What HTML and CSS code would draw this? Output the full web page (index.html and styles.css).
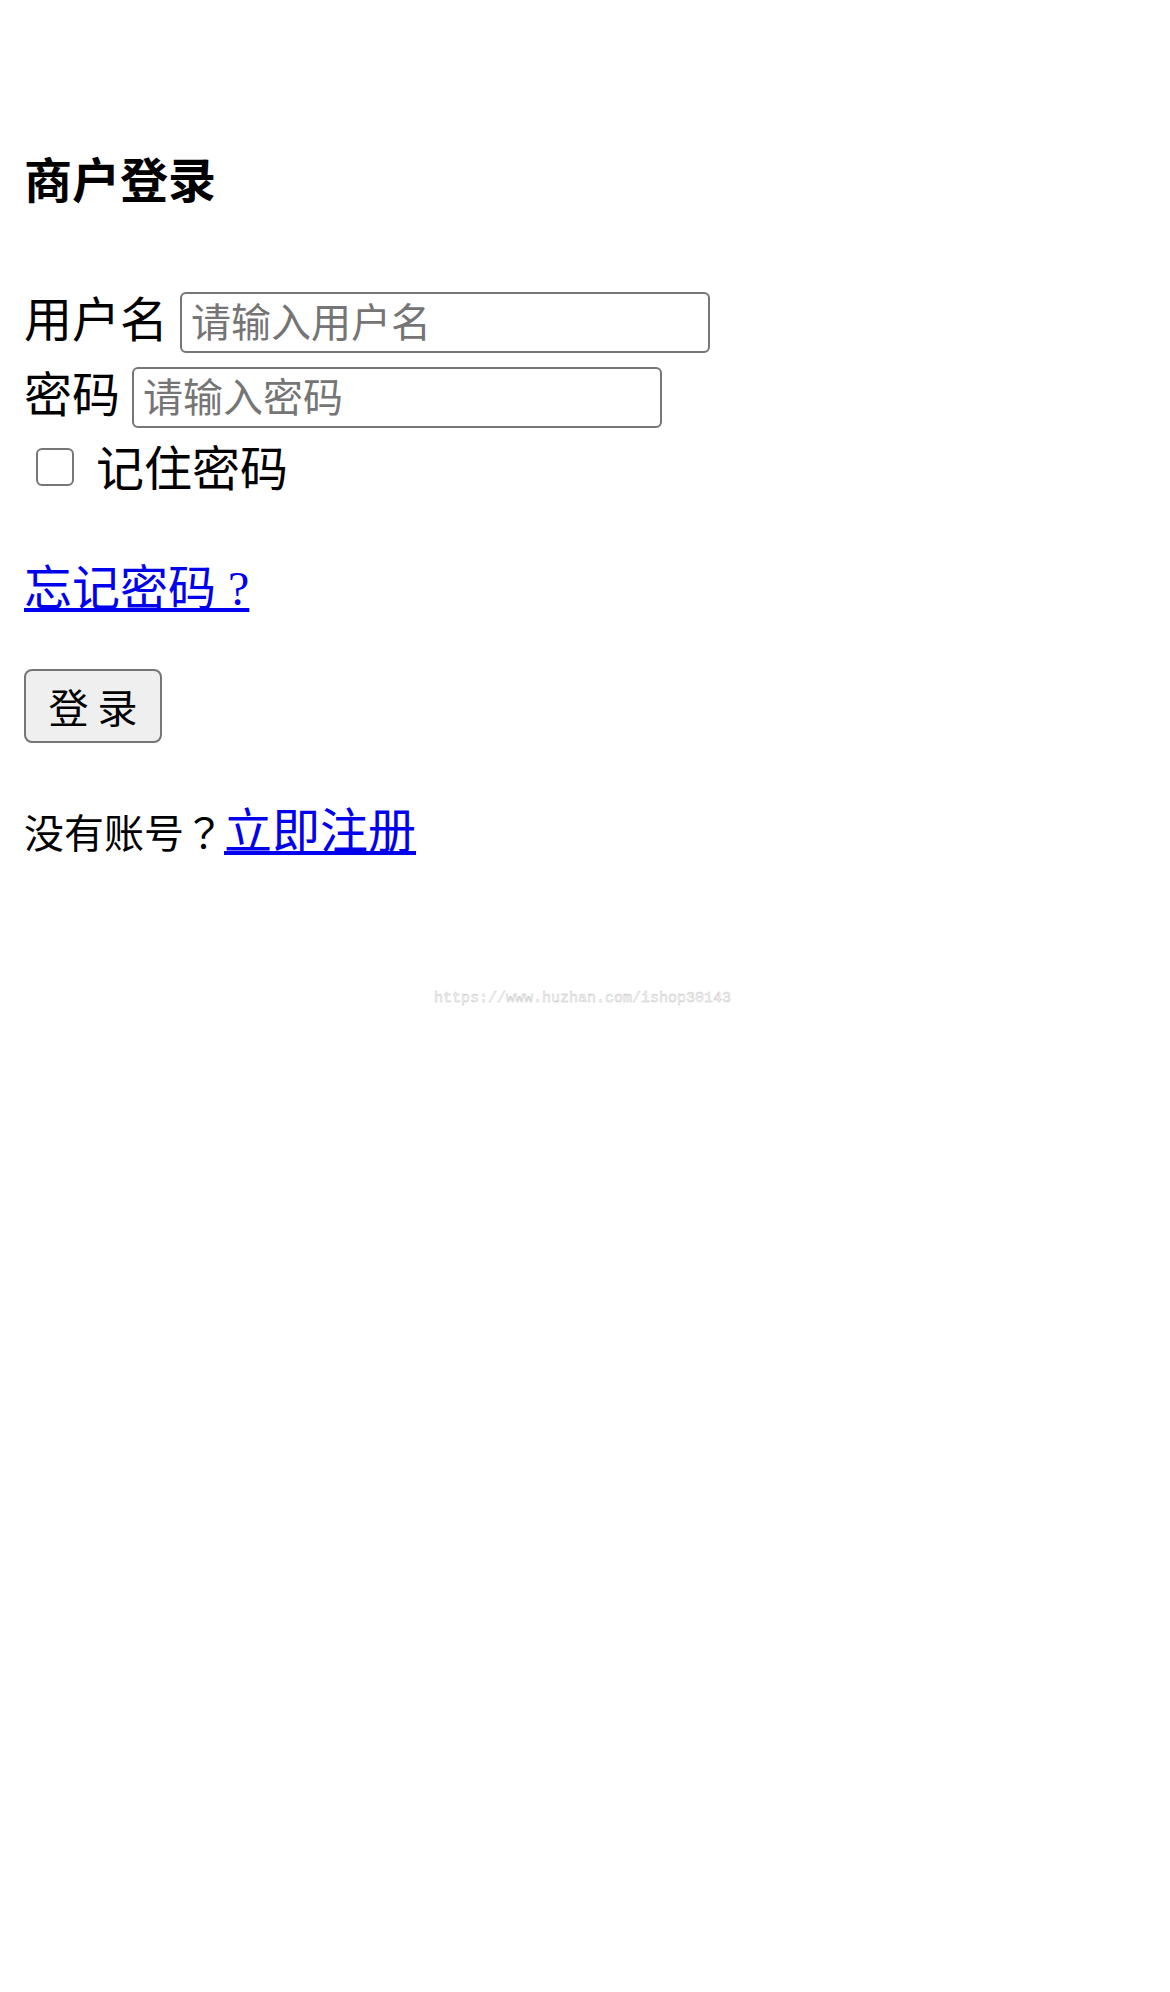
FILE: index.html
```html
<!DOCTYPE html>
<html lang="zh-CN">
<head>
<meta charset="utf-8">
<title>商户登录</title>
<link rel="stylesheet" href="styles.css">
</head>
<body>
<div class="page">
  <h4 class="title">商户登录</h4>
  <form class="login-form" action="#" onsubmit="return false;">
    <div class="field">
      <label class="field-label" for="username">用户名</label>
      <input class="text-input" id="username" type="text" placeholder="请输入用户名">
    </div>
    <div class="field">
      <label class="field-label" for="password">密码</label>
      <input class="text-input" id="password" type="password" placeholder="请输入密码">
    </div>
    <div class="remember">
      <input class="check" id="remember" type="checkbox">
      <label class="remember-label" for="remember">记住密码</label>
    </div>
    <p class="forgot"><a href="#" class="link">忘记密码 ?</a></p>
    <button class="submit" type="submit">登 录</button>
    <p class="register">没有账号<span class="q" lang="zh-TW">？</span><a href="#" class="link register-link">立即注册</a></p>
  </form>
</div>
<div class="watermark">https://www.huzhan.com/ishop30143</div>
</body>
</html>
```

FILE: styles.css
```css
html, body {
  margin: 0;
  padding: 0;
  background: #ffffff;
}

body {
  font-family: "Liberation Serif", "Noto Sans CJK SC", serif;
  color: #000000;
  font-size: 48px;
  position: relative;
  min-height: 1992px;
}

.page {
  padding: 0 24px;
}

.title {
  margin: 149px 0 0;
  font-family: "Noto Sans CJK SC", sans-serif;
  font-weight: 700;
  font-size: 48px;
  line-height: 56px;
}

.login-form {
  margin: 87px 0 0;
  display: flex;
  flex-direction: column;
  align-items: flex-start;
}

.field {
  display: flex;
  align-items: baseline;
  gap: 12px;
}

.field + .field {
  margin-top: 14px;
}

.field-label {
  font-family: "Noto Sans CJK SC", sans-serif;
  font-size: 48px;
  line-height: 48px;
}

.text-input {
  box-sizing: border-box;
  width: 530px;
  height: 61px;
  margin: 0;
  padding: 0 9px 5px;
  border: 2px solid #767676;
  border-radius: 6px;
  background: #ffffff;
  font-family: "Noto Sans CJK SC", sans-serif;
  font-size: 40px;
  color: #000000;
  outline: none;
}

.text-input::placeholder {
  color: #757575;
}

.remember {
  margin-top: 13px;
  height: 52px;
  display: flex;
  align-items: center;
}

.check {
  appearance: none;
  -webkit-appearance: none;
  box-sizing: border-box;
  width: 38px;
  height: 38px;
  margin: 0 22px 0 12px;
  border: 2px solid #767676;
  border-radius: 6px;
  background: #ffffff;
}

.remember-label {
  font-family: "Noto Sans CJK SC", sans-serif;
  font-size: 48px;
  line-height: 52px;
  padding-bottom: 5px;
}

.forgot {
  margin: 68px 0 0;
  font-size: 48px;
  line-height: 56px;
}

.link {
  color: #0000ee;
  text-decoration: underline;
}

.submit {
  box-sizing: border-box;
  margin: 52px 0 0;
  width: 138px;
  height: 74px;
  padding: 0;
  border: 2px solid #767676;
  border-radius: 8px;
  background: #efefef;
  font-family: "Noto Sans CJK SC", sans-serif;
  font-size: 40px;
  color: #000000;
}

.register {
  margin: 60px 0 0;
  font-size: 40px;
  line-height: 56px;
}

.q {
  font-family: "Noto Sans CJK TC", sans-serif;
}

.register-link {
  font-size: 48px;
}

.watermark {
  position: absolute;
  left: 434px;
  top: 989px;
  font-family: "Liberation Mono", monospace;
  font-size: 15px;
  line-height: 20px;
  color: #ffffff;
  -webkit-text-stroke: 0.5px #c6c6c6;
  white-space: nowrap;
}
```
